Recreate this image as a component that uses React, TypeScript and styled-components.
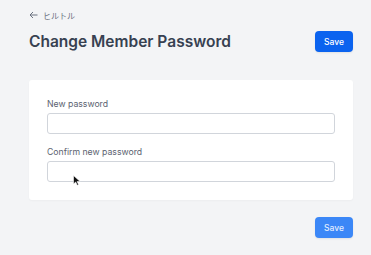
import React from 'react';
import styled, { createGlobalStyle } from 'styled-components';

const GlobalStyle = createGlobalStyle`
  html, body {
    margin: 0;
    padding: 0;
    background: #f3f4f6;
    font-family: Inter, "Noto Sans CJK JP", sans-serif;
  }
`;

const Page = styled.div`
  position: relative;
  width: 371px;
  height: 255px;
  padding: 9px 18px 0 29px;
  box-sizing: border-box;
  background: #f3f4f6;
  overflow: hidden;
`;

const BackLink = styled.a`
  display: flex;
  align-items: center;
  gap: 5px;
  height: 12px;
  font-size: 8px;
  color: #6b7280;
  text-decoration: none;
`;

const Header = styled.div`
  display: flex;
  justify-content: space-between;
  align-items: center;
  margin-top: 10px;
`;

const Title = styled.h1`
  margin: 0;
  font-size: 15.5px;
  font-weight: 600;
  color: #374151;
`;

const Button = styled.button<{ $muted?: boolean }>`
  height: 21px;
  padding: 0 9px;
  border: none;
  border-radius: 4px;
  font-family: Inter, sans-serif;
  font-size: 8.5px;
  font-weight: 500;
  color: ${(p) => (p.$muted ? '#e0ecff' : '#ffffff')};
  background: ${(p) => (p.$muted ? '#3b87f7' : '#0b63ef')};
  box-shadow: 0 1px 2px rgba(0, 0, 0, 0.08);
`;

const Card = styled.div`
  margin-top: 28px;
  padding: 19px 18px 18px;
  background: #ffffff;
  border-radius: 3px;
  box-shadow: 0 1px 2px rgba(0, 0, 0, 0.03);
  display: flex;
  flex-direction: column;
  gap: 13px;
`;

const Field = styled.div`
  display: flex;
  flex-direction: column;
  gap: 3px;
`;

const Label = styled.label`
  font-size: 8.7px;
  color: #5b6270;
  line-height: 11px;
`;

const Input = styled.input`
  width: 288px;
  height: 21px;
  box-sizing: border-box;
  border: 1px solid #d1d5db;
  border-radius: 3px;
  background: #fff;
`;

const Footer = styled.div`
  display: flex;
  justify-content: flex-end;
  margin-top: 17px;
`;

const Cursor = styled.svg`
  position: absolute;
  left: 73px;
  top: 175px;
`;

const App: React.FC = () => {
  return (
    <Page>
      <GlobalStyle />
      <BackLink href="#">
        <svg width="9" height="8" viewBox="0 0 9 8" fill="none" stroke="#6b7280" strokeWidth="1">
          <path d="M8.5 4H1M4 1L1 4l3 3" />
        </svg>
        ヒルトル
      </BackLink>
      <Header>
        <Title>Change Member Password</Title>
        <Button>Save</Button>
      </Header>
      <Card>
        <Field>
          <Label>New password</Label>
          <Input type="password" />
        </Field>
        <Field>
          <Label>Confirm new password</Label>
          <Input type="password" />
        </Field>
      </Card>
      <Footer>
        <Button $muted>Save</Button>
      </Footer>
      <Cursor width="8" height="11" viewBox="0 0 8 11">
        <path d="M0.5 0.5v8.5l2.2-2 1.5 3.3 1.4-0.6-1.5-3.2h3z" fill="#111" stroke="#fff" strokeWidth="0.6" />
      </Cursor>
    </Page>
  );
};

export default App;
